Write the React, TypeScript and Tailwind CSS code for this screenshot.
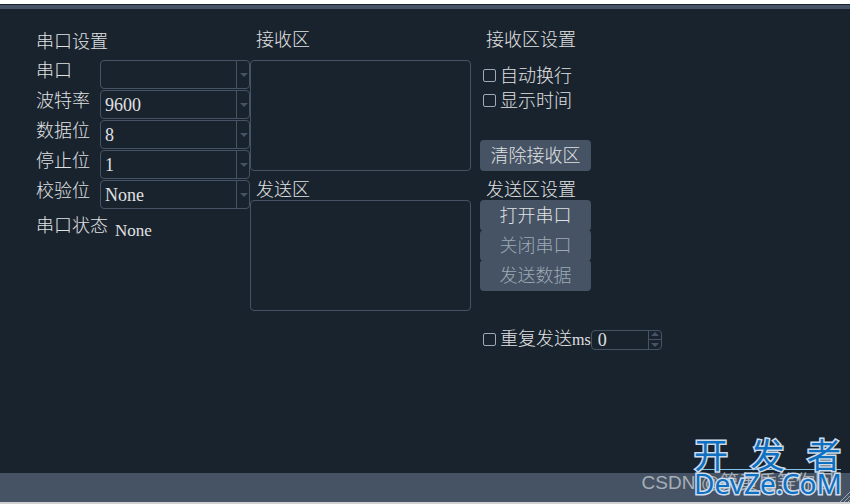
import React, { useState } from 'react';

const FONT = "font-['Liberation_Serif','Noto_Sans_CJK_SC',serif]";

interface ComboProps {
  id: string;
  label: string;
  options: string[];
}

const Combo: React.FC<ComboProps> = ({ id, label, options }) => (
  <div className="flex h-[30px]">
    <label htmlFor={id} className="w-16 shrink-0 pt-px leading-5">
      {label}
    </label>
    <div className="relative h-[29px] w-[151px]">
      <select
        id={id}
        className="h-full w-full appearance-none rounded border border-[#455364] bg-transparent pl-1 text-lg leading-5 text-[#e0e1e3] outline-none"
      >
        {options.map((option) => (
          <option key={option} className="bg-[#19232d]">{option}</option>
        ))}
      </select>
      <span className="pointer-events-none absolute inset-y-0 right-0 flex w-[14px] items-center justify-center border-l border-[#455364]">
        <svg width="8" height="4" viewBox="0 0 8 4" fill="#455364">
          <path d="M0 0h8L4 4z" />
        </svg>
      </span>
    </div>
  </div>
);

interface CheckProps {
  children: React.ReactNode;
}

const Check: React.FC<CheckProps> = ({ children }) => (
  <label className="flex h-[25px] items-center gap-1 whitespace-nowrap">
    <input
      type="checkbox"
      className="size-[13px] shrink-0 appearance-none rounded-xs border border-[#9da9b5] checked:bg-[#1a72bb]"
    />
    <span>{children}</span>
  </label>
);

interface ActionProps {
  disabled?: boolean;
  children: React.ReactNode;
}

const Action: React.FC<ActionProps> = ({ disabled, children }) => (
  <button
    type="button"
    disabled={disabled}
    className="h-[31px] w-[111px] rounded bg-[#455364] leading-5 text-[#e0e1e3] disabled:text-[#9da9b5]"
  >
    {children}
  </button>
);

export default function App() {
  const [interval, setIntervalMs] = useState(0);

  return (
    <div className={`flex min-h-screen flex-col bg-[#19232d] text-lg leading-5 font-light text-[#e0e1e3] ${FONT}`}>
      {/* Window edge and menu strip */}
      <div className="h-1 bg-white" />
      <div className="mt-px h-1 bg-[#455364]" />

      <main className="flex flex-1 items-start pl-9 pt-[21px]">
        {/* Serial port settings */}
        <section className="w-[214px] shrink-0 pt-0.5">
          <h2 className="h-7">串口设置</h2>
          <Combo id="port" label="串口" options={['']} />
          <Combo id="baud" label="波特率" options={['9600', '19200', '115200']} />
          <Combo id="data" label="数据位" options={['8', '7', '6', '5']} />
          <Combo id="stop" label="停止位" options={['1', '1.5', '2']} />
          <Combo id="parity" label="校验位" options={['None', 'Even', 'Odd']} />
          <div className="flex gap-[7px] pt-1.5">
            <span>串口状态</span>
            <output className="pt-[5px] text-[17px] leading-5">None</output>
          </div>
        </section>

        {/* Receive and send areas */}
        <section className="w-[221px] shrink-0">
          <label htmlFor="receive" className="block h-[30px] pl-1.5">接收区</label>
          <textarea
            id="receive"
            readOnly
            className="block h-[111px] w-full resize-none rounded border border-[#455364] px-1 outline-none"
          />
          <label htmlFor="send" className="block h-[29px] pl-1.5 pt-[9px]">发送区</label>
          <textarea
            id="send"
            className="block h-[111px] w-full resize-none rounded border border-[#455364] px-1 outline-none"
          />
        </section>

        {/* Options for both areas */}
        <section className="ml-[9px] shrink-0">
          <h2 className="h-[33px] pl-1.5">接收区设置</h2>
          <div className="pl-[3px]">
            <Check>自动换行</Check>
            <Check>显示时间</Check>
          </div>
          <div className="flex pt-[27px]">
            <Action>清除接收区</Action>
          </div>
          <h2 className="h-[29px] pl-1.5 pt-[9px]">发送区设置</h2>
          <div className="flex flex-col -space-y-px">
            <Action>打开串口</Action>
            <Action disabled>关闭串口</Action>
            <Action disabled>发送数据</Action>
          </div>
          <div className="flex items-center pl-[3px] pt-9">
            <Check>
              重复发送<span className="text-base leading-5">ms</span>
            </Check>
            <div className="relative h-5 w-[71px]">
              <input
                type="number"
                aria-label="重复发送间隔"
                value={interval}
                onChange={(e) => setIntervalMs(Number(e.target.value))}
                className="h-full w-full appearance-none rounded border border-[#455364] pl-1.5 leading-4 outline-none [&::-webkit-inner-spin-button]:appearance-none"
              />
              <div className="absolute inset-y-0 right-0 flex w-[14px] flex-col border-l border-[#455364]">
                <button
                  type="button"
                  aria-label="增加"
                  onClick={() => setIntervalMs(interval + 1)}
                  className="flex flex-1 items-center justify-center border-b border-[#455364]"
                >
                  <svg width="8" height="4" viewBox="0 0 8 4" fill="#455364">
                    <path d="M0 4h8L4 0z" />
                  </svg>
                </button>
                <button
                  type="button"
                  aria-label="减少"
                  onClick={() => setIntervalMs(Math.max(0, interval - 1))}
                  className="flex flex-1 items-center justify-center"
                >
                  <svg width="8" height="4" viewBox="0 0 8 4" fill="#455364">
                    <path d="M0 0h8L4 4z" />
                  </svg>
                </button>
              </div>
            </div>
          </div>
        </section>
      </main>

      {/* Status bar with watermarks */}
      <footer className="relative h-[31px] border-b-2 border-[#d0d0d0] bg-[#455364] font-['Liberation_Sans','Noto_Sans_CJK_SC',sans-serif] font-normal">
        <span className="absolute right-4 top-0 whitespace-nowrap text-[19px] leading-5 text-[#a9afb7]">
          CSDN @第黄昏等你回
        </span>
        <div className="absolute bottom-1.5 right-[9px] w-[147px] font-['Noto_Sans','Noto_Sans_CJK_SC',sans-serif] text-[#0f6fc0] [-webkit-text-stroke:3px_#cddcea] [paint-order:stroke_fill]">
          <div className="flex justify-between border-b border-[#7fc4ea] text-[34px] leading-7">
            <span>开</span>
            <span>发</span>
            <span>者</span>
          </div>
          <div className="text-[28px] leading-[26px]">DevZe.CoM</div>
        </div>
        <svg className="absolute bottom-0 right-0" width="10" height="10" viewBox="0 0 10 10" stroke="#9da9b5">
          <path d="M0 10L10 0M4 10l6-6M8 10l2-2" />
        </svg>
      </footer>
    </div>
  );
}
